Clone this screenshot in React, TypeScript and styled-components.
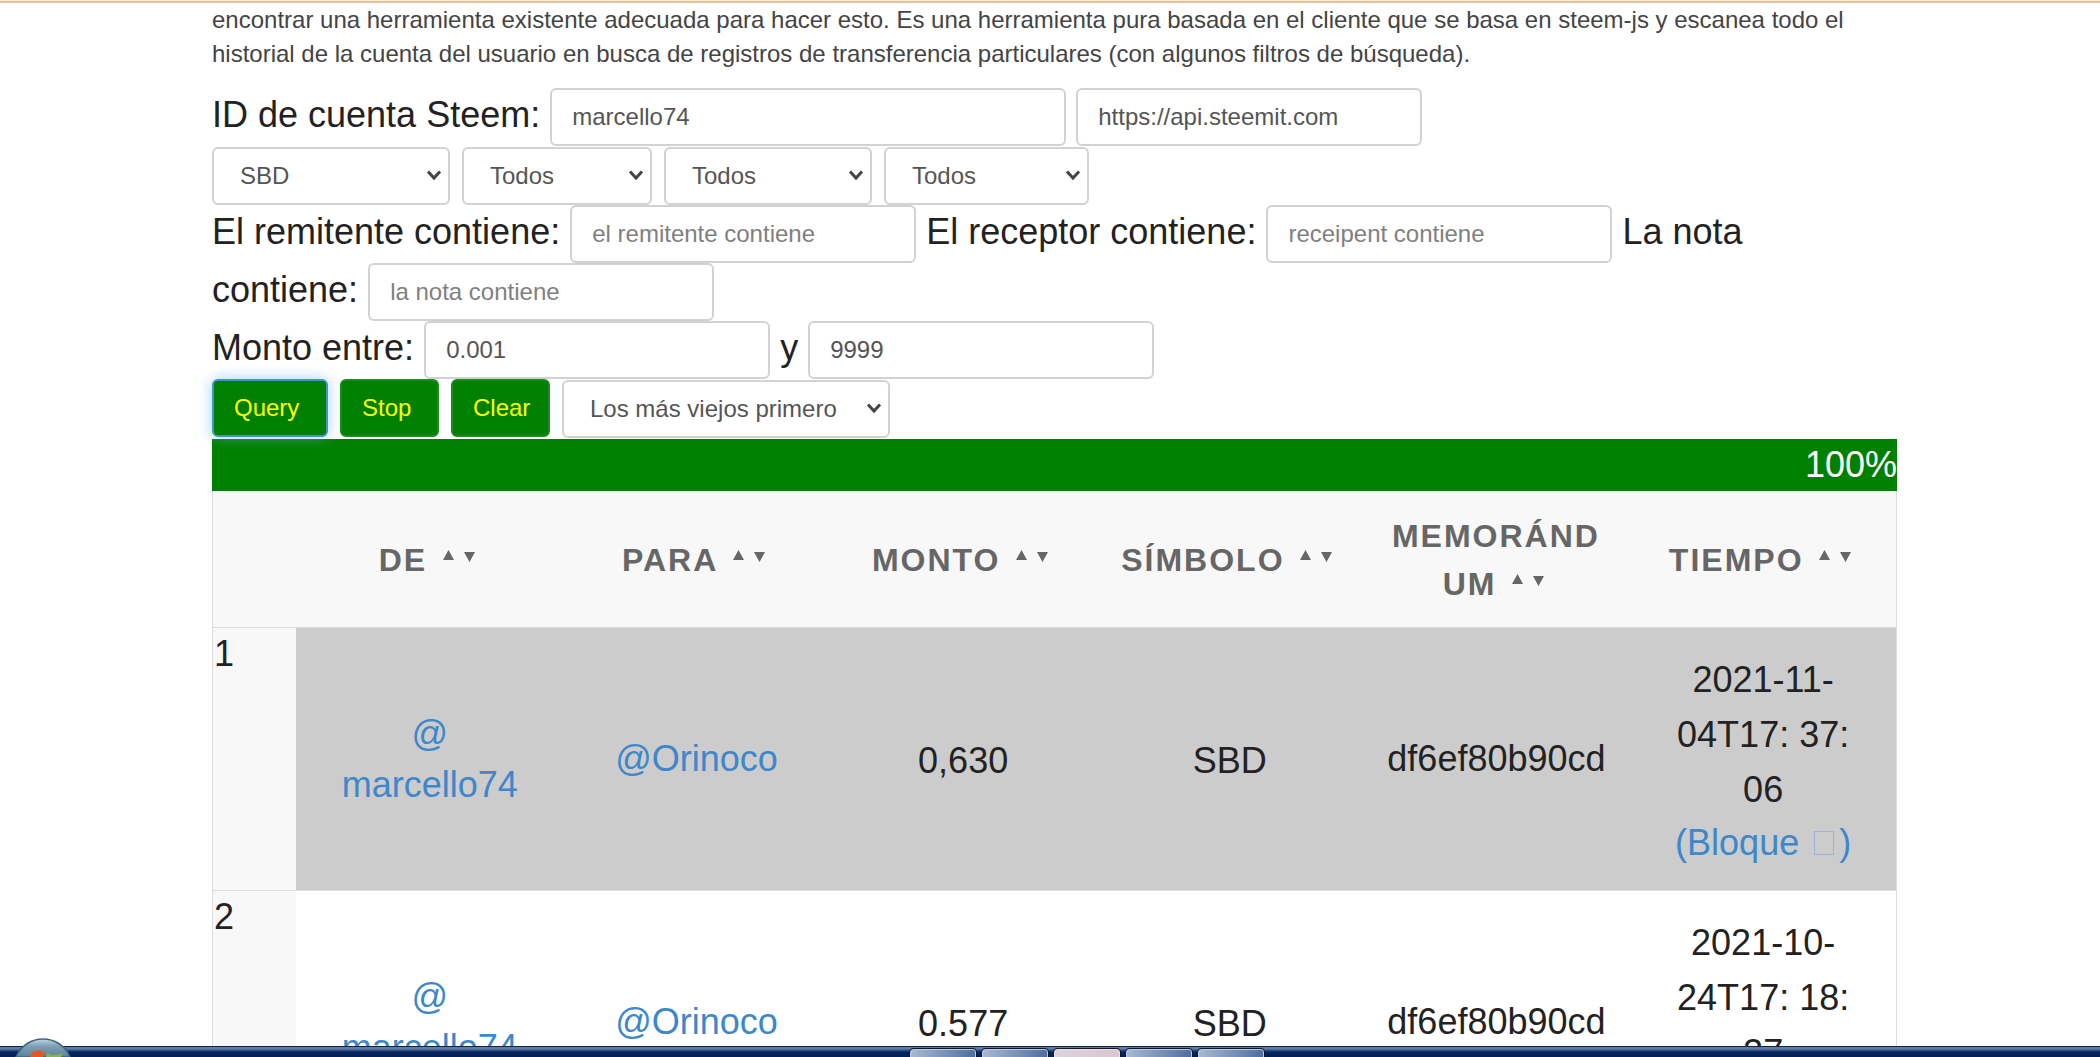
import React from "react";
import styled, { createGlobalStyle, css } from "styled-components";

const GlobalStyle = createGlobalStyle`
  *, *::before, *::after { box-sizing: border-box; }
  body {
    margin: 0;
    background: #fff;
    color: #222;
    font-family: "Liberation Sans", Arial, Helvetica, sans-serif;
    font-size: 36px;
    line-height: 52px;
  }
`;

const Screen = styled.div`
  display: flex;
  flex-direction: column;
  height: 100vh;
`;

const TopStrip = styled.div`
  flex: none;
  height: 3px;
  background: #e0c39c;
  border-top: 1px solid #fcecd8;
`;

const Main = styled.main`
  flex: 1;
  min-height: 0;
  overflow: hidden;
  padding: 0 203px 0 212px;
`;

const Intro = styled.p`
  margin: 0 0 17px;
  font-size: 24px;
  line-height: 34px;
  color: #444;
`;

const QueryForm = styled.form`
  margin-bottom: 1px;
`;

const Line = styled.div`
  line-height: 52px;
`;

const ControlRow = styled.div`
  display: flex;
  gap: 12px;
`;

const control = css`
  height: 58px;
  border: 2px solid #d2d2d2;
  border-radius: 6px;
  background: #fff;
  color: #555;
  font-family: inherit;
  font-size: 24px;
  line-height: 34px;
`;

const TextField = styled.input<{ $wide?: boolean }>`
  ${control}
  width: ${(p) => (p.$wide ? 516 : 346)}px;
  padding: 0 20px;
  vertical-align: middle;
  &::placeholder { color: #808080; opacity: 1; }
`;

const SelectBox = styled.span<{ $width: number }>`
  position: relative;
  display: block;
  width: ${(p) => p.$width}px;
`;

const Select = styled.select`
  ${control}
  width: 100%;
  padding: 0 26px;
  appearance: none;
`;

const Chevron = styled.svg`
  position: absolute;
  right: 8px;
  top: 23px;
  width: 16px;
  height: 12px;
  pointer-events: none;
`;

const ActionButton = styled.button<{ $active?: boolean }>`
  width: ${(p) => (p.$active ? 116 : 99)}px;
  height: 58px;
  padding: 0 20px;
  border: 2px solid ${(p) => (p.$active ? "#3f93cf" : "#1c8a1c")};
  border-radius: 6px;
  background: #008000;
  color: #ff0;
  font-family: inherit;
  font-size: 24px;
  line-height: 34px;
  text-align: left;
  box-shadow: ${(p) => (p.$active ? "0 0 14px rgba(102, 175, 233, 0.6)" : "none")};
`;

const Progress = styled.div`
  background: #008000;
  color: #fff;
  text-align: right;
`;

const Table = styled.table`
  width: 100%;
  table-layout: fixed;
  border-collapse: separate;
  border-spacing: 0;
  border: solid #ddd;
  border-width: 0 1px;
`;

const HeadCell = styled.th`
  padding: 21px 23px 19px;
  border-bottom: 1px solid #ddd;
  background: #f8f8f8;
  color: #666;
  font-size: 32px;
  line-height: 48px;
  letter-spacing: 2px;
  text-transform: uppercase;
  overflow-wrap: break-word;
`;

const CornerCell = styled(HeadCell)`
  width: 83px;
  padding: 0;
`;

const SortArrows = styled.svg`
  width: 34px;
  height: 12px;
  margin: 0 3px 0 5px;
  vertical-align: 9px;
`;

const Row = styled.tr<{ $shaded: boolean }>`
  background: ${(p) => (p.$shaded ? "#ccc" : "#fff")};
`;

const IndexCell = styled.th`
  padding: 0 1px;
  border-bottom: 1px solid #ddd;
  background: #f8f8f8;
  font-weight: normal;
  text-align: left;
  vertical-align: top;
`;

const Cell = styled.td<{ $value?: boolean }>`
  padding: ${(p) => (p.$value ? "24px 22px 21px 23px" : "22px 22px 23px 23px")};
  border-bottom: 1px solid #ddd;
  line-height: ${(p) => (p.$value ? 55 : 51)}px;
  text-align: center;
  vertical-align: middle;
`;

const Link = styled.a`
  color: #3d87ca;
  text-decoration: none;
`;

const BlockLink = styled(Link)`
  display: block;
  line-height: 52px;
  white-space: nowrap;
`;

const MissingGlyph = styled.span`
  display: inline-block;
  width: 20px;
  height: 24px;
  margin: 0 5px;
  border: 1px solid #9fb0dc;
`;

const Taskbar = styled.footer`
  position: relative;
  flex: none;
  height: 11px;
  display: flex;
  gap: 6px;
  padding: 2px 0 0 910px;
  border-top: 1px solid #15233f;
  background: linear-gradient(#5f7ca8 0 2px, #38588c 3px, #04265e 5px, #001f52);
`;

const TaskButton = styled.button<{ $warm?: boolean }>`
  width: 66px;
  padding: 0;
  border: 2px solid ${(p) => (p.$warm ? "#f2dcde" : "#b9cbe2")};
  border-width: 1px 1px 0;
  border-radius: 3px 3px 0 0;
  outline: 1px solid #0a1730;
  background: ${(p) =>
    p.$warm
      ? "linear-gradient(90deg, #d9d3de, #ddc6cd)"
      : "linear-gradient(100deg, #a9bad2, #4f6d9c)"};
`;

const Orb = styled.svg`
  position: absolute;
  left: 15px;
  bottom: 0;
  width: 56px;
  height: 19px;
`;

const columns = ["De", "Para", "Monto", "Símbolo", "Memorándum", "Tiempo"];

const transfers = [
  { from: "@ marcello74", to: "@Orinoco", amount: "0,630", symbol: "SBD", memo: "df6ef80b90cd", time: "2021-11-04T17: 37: 06" },
  { from: "@ marcello74", to: "@Orinoco", amount: "0.577", symbol: "SBD", memo: "df6ef80b90cd", time: "2021-10-24T17: 18: 27" },
];

const filters = [
  { label: "Moneda", value: "SBD", width: 238 },
  { label: "Tipo", value: "Todos", width: 190 },
  { label: "Año", value: "Todos", width: 208 },
  { label: "Mes", value: "Todos", width: 205 },
];

function Dropdown({ label, value, width }: { label: string; value: string; width: number }) {
  return (
    <SelectBox $width={width}>
      <Select aria-label={label}>
        <option>{value}</option>
      </Select>
      <Chevron viewBox="0 0 16 12" aria-hidden="true">
        <path d="M2 2.5 8 9l6-6.5" fill="none" stroke="#444" strokeWidth="3" />
      </Chevron>
    </SelectBox>
  );
}

export default function App() {
  return (
    <Screen>
      <GlobalStyle />
      <TopStrip />
      <Main>
        <Intro>
          encontrar una herramienta existente adecuada para hacer esto. Es una herramienta pura basada en el
          cliente que se basa en steem-js y escanea todo el historial de la cuenta del usuario en busca de
          registros de transferencia particulares (con algunos filtros de búsqueda).
        </Intro>
        <QueryForm onSubmit={(e) => e.preventDefault()}>
          <Line>
            <label htmlFor="account">ID de cuenta Steem:</label>{" "}
            <TextField id="account" $wide defaultValue="marcello74" />{" "}
            <TextField aria-label="API" defaultValue="https://api.steemit.com" />
          </Line>
          <ControlRow>
            {filters.map((f) => (
              <Dropdown key={f.label} {...f} />
            ))}
          </ControlRow>
          <Line>
            <label htmlFor="sender">El remitente contiene:</label>{" "}
            <TextField id="sender" placeholder="el remitente contiene" />{" "}
            <label htmlFor="receiver">El receptor contiene:</label>{" "}
            <TextField id="receiver" placeholder="receipent contiene" />{" "}
            <label htmlFor="memo">La nota contiene:</label>{" "}
            <TextField id="memo" placeholder="la nota contiene" />
          </Line>
          <Line>
            <label htmlFor="min">Monto entre:</label> <TextField id="min" defaultValue="0.001" />{" "}
            <label htmlFor="max">y</label> <TextField id="max" defaultValue="9999" />
          </Line>
          <ControlRow>
            <ActionButton $active type="submit">Query</ActionButton>
            <ActionButton type="button">Stop</ActionButton>
            <ActionButton type="button">Clear</ActionButton>
            <Dropdown label="Orden" value="Los más viejos primero" width={328} />
          </ControlRow>
        </QueryForm>
        <Progress>100%</Progress>
        <Table>
          <thead>
            <tr>
              <CornerCell />
              {columns.map((name) => (
                <HeadCell key={name} scope="col">
                  {name}{" "}
                  <SortArrows viewBox="0 0 34 12" aria-hidden="true">
                    <path d="M0 10 5.5 0 11 10ZM21 2h11l-5.500 10Z" fill="#666" />
                  </SortArrows>
                </HeadCell>
              ))}
            </tr>
          </thead>
          <tbody>
            {transfers.map((t, i) => (
              <Row key={t.time} $shaded={i % 2 === 0}>
                <IndexCell scope="row">{i + 1}</IndexCell>
                <Cell><Link href="#from">{t.from}</Link></Cell>
                <Cell><Link href="#to">{t.to}</Link></Cell>
                <Cell $value>{t.amount}</Cell>
                <Cell $value>{t.symbol}</Cell>
                <Cell>{t.memo}</Cell>
                <Cell $value>
                  {t.time}
                  <BlockLink href="#block">(Bloque <MissingGlyph />)</BlockLink>
                </Cell>
              </Row>
            ))}
          </tbody>
        </Table>
      </Main>
      <Taskbar>
        <Orb viewBox="0 0 56 19" aria-hidden="true">
          <defs>
            <linearGradient id="orb" x1="0" y1="0" x2="0" y2="1">
              <stop offset="0" stopColor="#c3d5df" />
              <stop offset="0.4" stopColor="#7f9fb4" />
              <stop offset="1" stopColor="#5b8199" />
            </linearGradient>
          </defs>
          <path d="M1 19C6 7 17 1 28 1s22 6 27 18Z" fill="url(#orb)" stroke="#3b6680" strokeWidth="1.500" />
          <path d="M15 19c1-7 8-8 15-5l-2 5Z" fill="#e2582a" />
          <path d="M32 15c5 3 10 2 16 0l-2 4H31Z" fill="#8cb04f" />
        </Orb>
        <TaskButton aria-label="Ventana 1" />
        <TaskButton aria-label="Ventana 2" />
        <TaskButton $warm aria-label="Ventana 3" />
        <TaskButton aria-label="Ventana 4" />
        <TaskButton aria-label="Ventana 5" />
      </Taskbar>
    </Screen>
  );
}
